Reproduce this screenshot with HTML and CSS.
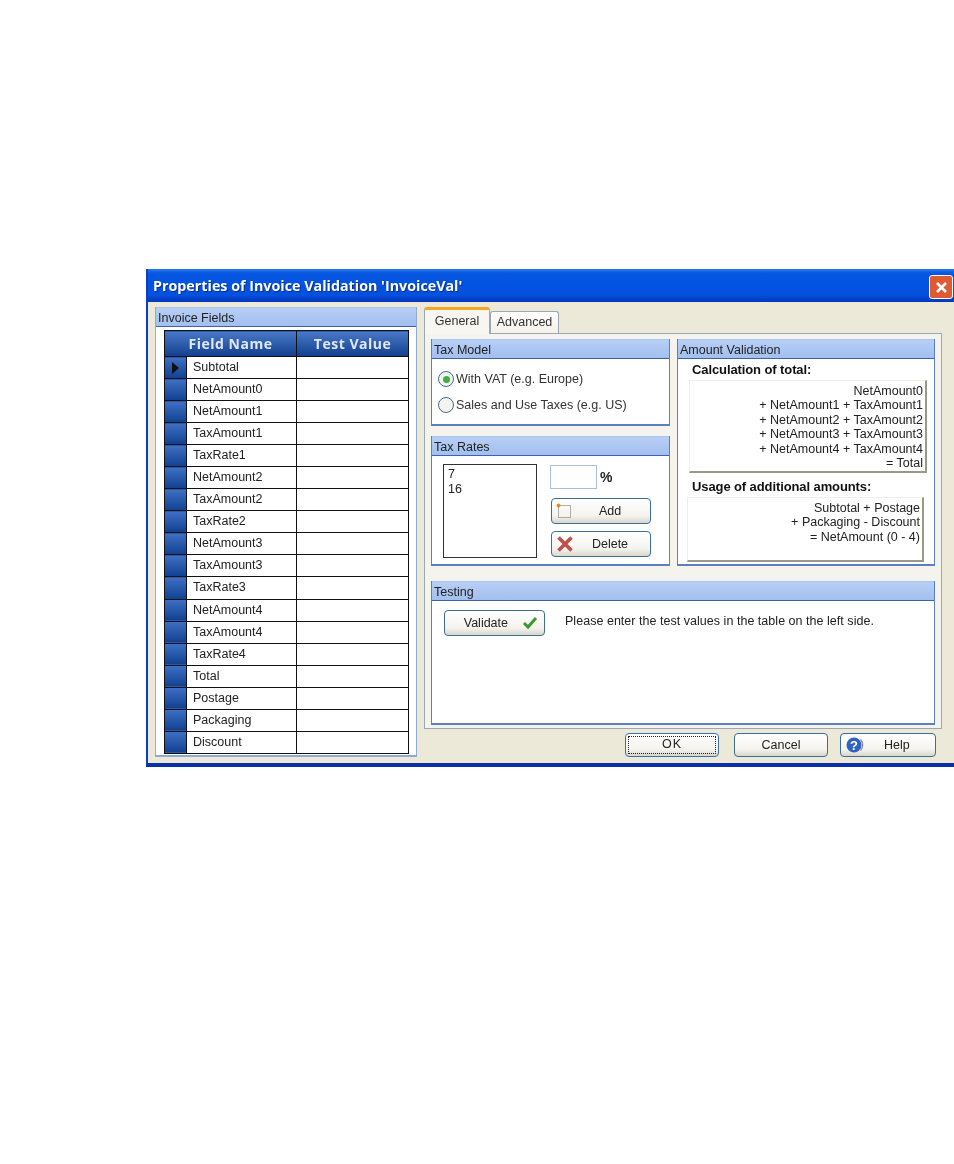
FILE: index.html
```html
<!DOCTYPE html>
<html lang="en">
<head>
<meta charset="utf-8">
<title>Properties of Invoice Validation</title>
<link rel="stylesheet" href="styles.css">
</head>
<body>
<div class="dialog">
  <div class="titlebar">
    <span class="title">Properties of Invoice Validation 'InvoiceVal'</span>
    <span class="close"><svg width="15" height="15" viewBox="0 0 15 15"><path d="M3 3l9 9M12 3l-9 9" stroke="#fff" stroke-width="2.6" fill="none"/></svg></span>
  </div>
  <div class="main">
    <section class="group fields">
      <h2 class="group-head">Invoice Fields</h2>
      <table class="grid">
        <colgroup><col class="col-rh"><col class="col-name"><col></colgroup>
        <thead><tr><th colspan="2">Field Name</th><th>Test Value</th></tr></thead>
        <tbody>
          <tr><td class="rh"><span class="arrow"></span></td><td>Subtotal</td><td></td></tr>
          <tr><td class="rh"></td><td>NetAmount0</td><td></td></tr>
          <tr><td class="rh"></td><td>NetAmount1</td><td></td></tr>
          <tr><td class="rh"></td><td>TaxAmount1</td><td></td></tr>
          <tr><td class="rh"></td><td>TaxRate1</td><td></td></tr>
          <tr><td class="rh"></td><td>NetAmount2</td><td></td></tr>
          <tr><td class="rh"></td><td>TaxAmount2</td><td></td></tr>
          <tr><td class="rh"></td><td>TaxRate2</td><td></td></tr>
          <tr><td class="rh"></td><td>NetAmount3</td><td></td></tr>
          <tr><td class="rh"></td><td>TaxAmount3</td><td></td></tr>
          <tr><td class="rh"></td><td>TaxRate3</td><td></td></tr>
          <tr><td class="rh"></td><td>NetAmount4</td><td></td></tr>
          <tr><td class="rh"></td><td>TaxAmount4</td><td></td></tr>
          <tr><td class="rh"></td><td>TaxRate4</td><td></td></tr>
          <tr><td class="rh"></td><td>Total</td><td></td></tr>
          <tr><td class="rh"></td><td>Postage</td><td></td></tr>
          <tr><td class="rh"></td><td>Packaging</td><td></td></tr>
          <tr><td class="rh"></td><td>Discount</td><td></td></tr>
        </tbody>
      </table>
    </section>
    <div class="right">
      <div class="tabs">
        <span class="tab active">General</span>
        <span class="tab">Advanced</span>
      </div>
      <div class="tabpanel">
        <section class="group taxmodel">
          <h2 class="group-head">Tax Model</h2>
          <div class="radios">
            <div class="radio-row"><span class="radio on"></span>With VAT (e.g. Europe)</div>
            <div class="radio-row"><span class="radio"></span>Sales and Use Taxes (e.g. US)</div>
          </div>
        </section>
        <section class="group amount">
          <h2 class="group-head">Amount Validation</h2>
          <div class="amount-body">
            <h3 class="sub">Calculation of total:</h3>
            <div class="calc calc1">NetAmount0<br>+ NetAmount1 + TaxAmount1<br>+ NetAmount2 + TaxAmount2<br>+ NetAmount3 + TaxAmount3<br>+ NetAmount4 + TaxAmount4<br>= Total</div>
            <h3 class="sub sub2">Usage of additional amounts:</h3>
            <div class="calc calc2">Subtotal + Postage<br>+ Packaging - Discount<br>= NetAmount (0 - 4)</div>
          </div>
        </section>
        <section class="group taxrates">
          <h2 class="group-head">Tax Rates</h2>
          <div class="rates-body">
            <div class="listbox">7<br>16</div>
            <div class="rates-side">
              <div class="pct-row"><span class="input"></span><b class="pct">%</b></div>
              <button class="btn side-btn"><svg class="ic" width="16" height="16" viewBox="0 0 16 16"><rect x="2.5" y="2.5" width="12" height="12" fill="none" stroke="#666" stroke-dasharray="1 1"/><circle cx="2.5" cy="2.5" r="2" fill="#f08a1d"/></svg><span class="lbl add-l">Add</span></button>
              <button class="btn side-btn"><svg class="ic" width="18" height="18" viewBox="0 0 18 18"><path d="M2.5 2.5l13 13M15.5 2.5l-13 13" stroke="#c0504d" stroke-width="3.6" fill="none"/></svg><span class="lbl del-l">Delete</span></button>
            </div>
          </div>
        </section>
        <section class="group testing">
          <h2 class="group-head">Testing</h2>
          <div class="testing-body">
            <button class="btn validate"><span class="val-l">Validate</span><svg width="16" height="14" viewBox="0 0 16 14"><path d="M2 7l4 4 8-9" stroke="#3a9a2e" stroke-width="3" fill="none"/></svg></button>
            <span class="hint">Please enter the test values in the table on the left side.</span>
          </div>
        </section>
      </div>
      <div class="actions">
        <button class="btn action default"><span class="focus">OK</span></button>
        <button class="btn action">Cancel</button>
        <button class="btn action help"><svg class="help-ic" width="18" height="18" viewBox="0 0 18 18"><circle cx="8" cy="9" r="7.5" fill="#2f62c4"/><path d="M14.5 3.5a8 8 0 0 1 0 11" stroke="#8a90a0" stroke-width="1.4" fill="none"/><text x="8" y="13.5" text-anchor="middle" class="q">?</text></svg><span class="help-l">Help</span></button>
      </div>
    </div>
  </div>
</div>
</body>
</html>
```
FILE: styles.css
```css
* { box-sizing: border-box; }
html, body { margin: 0; padding: 0; background: #fff; }
body { height: 1164px; width: 954px; overflow: hidden; font: 12.5px/14.4px "Liberation Sans", Arial, sans-serif; color: #222; padding: 269px 0 0 146px; }
.dialog { width: 808px; height: 498px; background: #ece9d8; border-left: 2px solid #0a3fc4; border-bottom: 4px solid #0a2fa8; filter: blur(0.4px); overflow: hidden; }
.titlebar { height: 33px; margin-left: -2px; width: 810px; background: linear-gradient(#2a7cf0 0, #0757e0 12%, #0353e3 45%, #0450dc 80%, #0336b8 100%); display: flex; align-items: center; justify-content: space-between; padding: 0 3px 0 7px; }
.title { color: #fff; font: bold 14.3px "Open Sans", "Liberation Sans", sans-serif; text-shadow: 1px 1px 0 #0a2e9a; }
.close { width: 24px; height: 24px; margin-top: 3px; border-radius: 3px; background: #de5a32; border: 1px solid #fff; display: flex; align-items: center; justify-content: center; }
.main { display: flex; padding: 5px 0 0 7px; }
.group { background: #fff; border: 1px solid #5b7fc0; border-top: 0; border-bottom-width: 2px; }
.group-head { margin: 0; height: 20px; font: 12.5px/20px "Liberation Sans", Arial, sans-serif; color: #222; padding-left: 2px; background: linear-gradient(#b8cff5, #a2bfef); border-top: 1px solid #a9c4f0; border-bottom: 1px solid #3f63a8; white-space: nowrap; }
.fields { width: 262px; height: 450px; border-color: #8fa9d8; }
.grid { border-collapse: collapse; margin: 3px 0 0 8px; width: 245px; height: 424px; table-layout: fixed; background: #fff; }
.col-rh { width: 22px; }
.col-name { width: 110px; }
.grid th, .grid td { border: 1.5px solid #111; padding: 0; height: 22px; }
.grid td.rh { background: linear-gradient(#3e70c6, #11408f); padding: 0; }
.grid td { padding-left: 6px; line-height: 19px; color: #222; }
.grid thead th { height: 26px; background: linear-gradient(#4878c8, #12408e); color: #dfe8f6; font: bold 14px "Open Sans", "Liberation Sans", sans-serif; letter-spacing: .5px; }
.arrow { display: block; margin-left: 7px; width: 0; height: 0; border-left: 7px solid #111; border-top: 6px solid transparent; border-bottom: 6px solid transparent; }
.right { margin-left: 7px; width: 530px; }
.tabs { display: flex; height: 26px; align-items: flex-end; }
.tab { width: 69px; height: 22px; border: 1px solid #9aa7b4; border-bottom: 0; border-radius: 3px 3px 0 0; background: linear-gradient(#fff, #f3f1e8); text-align: center; line-height: 20px; color: #333; }
.tab.active { width: 66px; height: 27px; line-height: 23px; border-top: 3px solid #f5a623; background: #f7f6f1; position: relative; z-index: 1; margin-bottom: -1px; }
.tabpanel { width: 518px; height: 396px; background: #f4f3ee; border: 1px solid #9aa7b4; padding: 5px 6px; display: grid; grid-template-columns: 239px 258px; grid-template-rows: 87px 130px 144px; column-gap: 7px; row-gap: 10px; }
.amount { grid-column: 2; grid-row: 1 / span 2; }
.taxmodel { grid-column: 1; grid-row: 1; }
.taxrates { grid-column: 1; grid-row: 2; }
.testing { grid-column: 1 / span 2; grid-row: 3; margin-top: 5px; height: 144px; }
.radios { padding: 7px 0 0 6px; }
.radio-row { display: flex; align-items: center; height: 26px; gap: 2px; color: #333; white-space: nowrap; }
.radio { width: 16px; height: 16px; border-radius: 50%; border: 1.5px solid #4a6a8a; background: #f4f4ee; display: flex; align-items: center; justify-content: center; flex: none; }
.radio.on::after { content: ""; width: 7px; height: 7px; border-radius: 50%; background: #3fb044; }
.rates-body { display: flex; padding: 8px 0 0 11px; }
.listbox { width: 94px; height: 94px; border: 1.5px solid #333; background: #fff; padding: 2px 0 0 4px; line-height: 15px; }
.rates-side { margin-left: 13px; display: flex; flex-direction: column; }
.pct-row { display: flex; align-items: center; gap: 3px; height: 24px; margin-top: 1px; }
.input { width: 47px; height: 24px; border: 1px solid #a9c0d8; background: #fff; }
.pct { font: bold 14px "Liberation Sans", sans-serif; }
.btn { font: 12.5px "Liberation Sans", Arial, sans-serif; color: #222; border: 1.5px solid #3d6d99; border-radius: 4px; background: linear-gradient(#fff, #f4f3ee 70%, #d9d7cb); padding: 0; display: flex; align-items: center; }
.side-btn { width: 100px; height: 26px; margin: 9px 0 0 1px; }
.side-btn + .side-btn { margin-top: 7px; }
.ic { margin-left: 4px; flex: none; }
.lbl { flex: 1; text-align: center; }
.add-l { padding-right: 2px; }
.del-l { padding-right: 4px; }
.sub { margin: 0; font: bold 13px/14px "Liberation Sans", Arial, sans-serif; color: #111; padding: 4px 0 0 14px; letter-spacing: -.1px; }
.sub2 { padding-top: 7px; }
.calc { background: #fff; border: 1px solid #f0efe6; border-right: 2px solid #9a9888; border-bottom: 2px solid #9a9888; text-align: right; color: #222; }
.calc1 { margin: 3px 0 0 11px; width: 238px; height: 93px; padding: 3px 2px 0 0; }
.calc2 { margin: 3px 0 0 9px; width: 237px; height: 65px; padding: 3px 2px 0 0; }
.testing-body { display: flex; align-items: center; padding: 9px 0 0 12px; gap: 20px; }
.validate { width: 101px; height: 26px; justify-content: flex-end; padding-right: 6px; flex: none; }
.val-l { margin-right: 14px; }
.hint { color: #222; white-space: nowrap; position: relative; top: -2px; letter-spacing: .03px; }
.actions { display: flex; padding: 4px 0 0 201px; gap: 15px; }
.action { width: 94px; height: 24px; justify-content: center; }
.action.default { border-color: #3d6fb5; padding: 2px; }
.focus { flex: 1; align-self: stretch; border: 1px dotted #222; line-height: 15px; text-align: center; letter-spacing: 1px; }
.action + .action + .action { margin-left: -3px; }
.help { justify-content: flex-start; position: relative; width: 96px; }
.help-ic { margin-left: 5px; flex: none; }
.help-l { margin-left: 20px; }
.q { fill: #fff; font: bold 13px "Liberation Sans", sans-serif; }
```
